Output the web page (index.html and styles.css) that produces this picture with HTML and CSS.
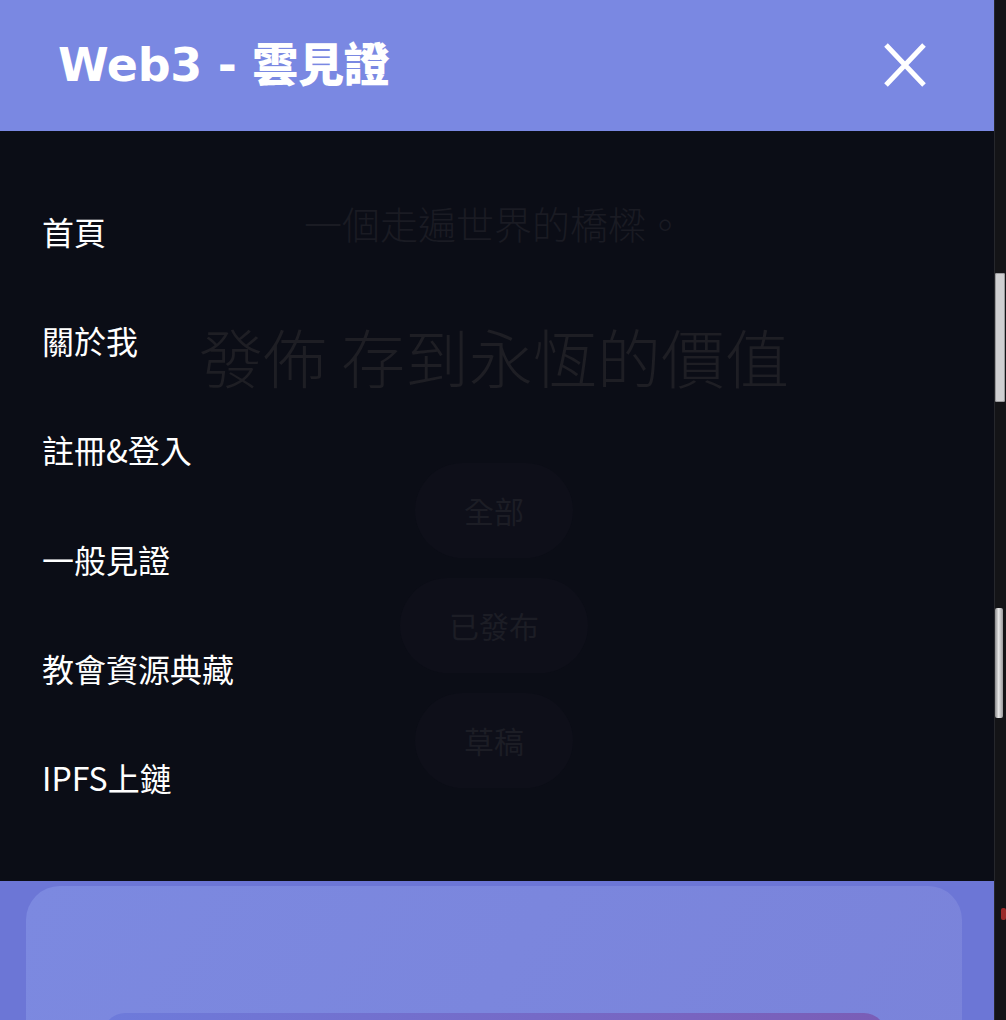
FILE: index.html
```html
<!DOCTYPE html>
<html lang="zh-Hant">
<head>
<meta charset="utf-8">
<title>Web3 - 雲見證</title>
<link rel="stylesheet" href="styles.css">
</head>
<body>
<div class="app">
  <div class="viewport">
    <header class="topbar">
      <h1 class="brand">Web3 - 雲見證</h1>
      <button class="close" aria-label="關閉">
        <svg width="42" height="44" viewBox="0 0 42 44"><path d="M2 2 L40 42 M40 2 L2 42" stroke="#fff" stroke-width="5" fill="none"/></svg>
      </button>
    </header>
    <section class="stage">
      <div class="hero">
        <p class="tagline">一個走遍世界的橋樑。</p>
        <h2 class="headline">發佈 存到永恆的價值</h2>
        <div class="filters">
          <span class="pill">全部</span>
          <span class="pill">已發布</span>
          <span class="pill">草稿</span>
        </div>
      </div>
      <nav class="drawer">
        <a class="drawer-item">首頁</a>
        <a class="drawer-item">關於我</a>
        <a class="drawer-item">註冊&amp;登入</a>
        <a class="drawer-item">一般見證</a>
        <a class="drawer-item">教會資源典藏</a>
        <a class="drawer-item">IPFS上鏈</a>
      </nav>
    </section>
    <section class="lower">
      <div class="card">
        <div class="card-inner"></div>
      </div>
    </section>
  </div>
  <div class="scrollbar">
    <div class="thumb thumb-a"></div>
    <div class="thumb thumb-b"></div>
    <div class="marker"></div>
  </div>
</div>
</body>
</html>
```
FILE: styles.css
```css
html, body {
  margin: 0;
  padding: 0;
  height: 1020px;
  overflow: hidden;
  background: #0b0d16;
}

.app {
  display: flex;
  width: 1006px;
  height: 1020px;
}

.viewport {
  width: 994px;
  display: flex;
  flex-direction: column;
}

.topbar {
  height: 131px;
  flex: none;
  background: #7a88e2;
  display: flex;
  align-items: center;
  justify-content: space-between;
  padding: 0 68px 2px 58px;
  box-sizing: border-box;
}

.brand {
  margin: 0;
  font-family: "DejaVu Sans", "Noto Sans CJK TC", sans-serif;
  font-weight: 900;
  font-size: 46px;
  line-height: 1;
  color: #fff;
  letter-spacing: -0.3px;
}

.close {
  border: 0;
  background: none;
  padding: 0;
  width: 42px;
  height: 44px;
  display: block;
}
.close svg { display: block; }

.stage {
  position: relative;
  height: 750px;
  flex: none;
  background: #0b0d16;
  font-family: "Noto Sans CJK TC", sans-serif;
}

.hero {
  display: flex;
  flex-direction: column;
  align-items: center;
  padding-top: 66px;
  padding-right: 6px;
}

.tagline {
  margin: 0;
  font-size: 38px;
  line-height: 52px;
  color: #1a1b23;
  font-weight: 300;
}

.headline {
  margin: 69px 0 0;
  font-size: 64px;
  line-height: 74px;
  font-weight: 300;
  color: #1e1e24;
}

.filters {
  margin-top: 71px;
  display: flex;
  flex-direction: column;
  align-items: center;
  gap: 20px;
}

.pill {
  height: 95px;
  padding: 0 49px;
  border-radius: 48px;
  background: #0e0f19;
  color: #1c1d25;
  font-size: 30px;
  line-height: 95px;
}

.drawer {
  position: absolute;
  top: 0;
  left: 0;
  padding: 46px 0 0 42px;
  display: flex;
  flex-direction: column;
}

.drawer-item {
  display: block;
  height: 109.2px;
  line-height: 109.2px;
  font-size: 32px;
  color: #fff;
  font-family: "Noto Sans CJK TC", sans-serif;
}

.lower {
  flex: 1;
  background: #6c76d6;
  padding: 5px 32px 0 26px;
  overflow: hidden;
}

.card {
  height: 200px;
  border-radius: 34px 34px 0 0;
  background: linear-gradient(120deg, #7c89e0, #7a83da);
  padding: 127px 76px 0 77px;
  box-sizing: border-box;
}

.card-inner {
  height: 60px;
  border-radius: 22px 22px 0 0;
  background: linear-gradient(90deg, #6d7bdb, #7864c0 75%, #7a5db6);
}

.scrollbar {
  width: 12px;
  flex: none;
  background: #141417;
  border-left: 1px solid #26272c;
  box-sizing: border-box;
  display: flex;
  flex-direction: column;
  align-items: flex-start;
}

.thumb {
  border-radius: 2px;
}

.thumb-a {
  margin-top: 273px;
  width: 10px;
  height: 129px;
  background: #cfcfd1;
  box-shadow: inset 0 0 0 1px #9a9a9c;
}

.thumb-b {
  margin-top: 206px;
  width: 8px;
  height: 110px;
  background: linear-gradient(90deg, #8a8a8c, #e6e6e6 45%, #9a9a9c);
}

.marker {
  margin-top: 190px;
  margin-left: 6px;
  width: 5px;
  height: 12px;
  background: #9b2a2a;
  border-radius: 2px;
}
```
